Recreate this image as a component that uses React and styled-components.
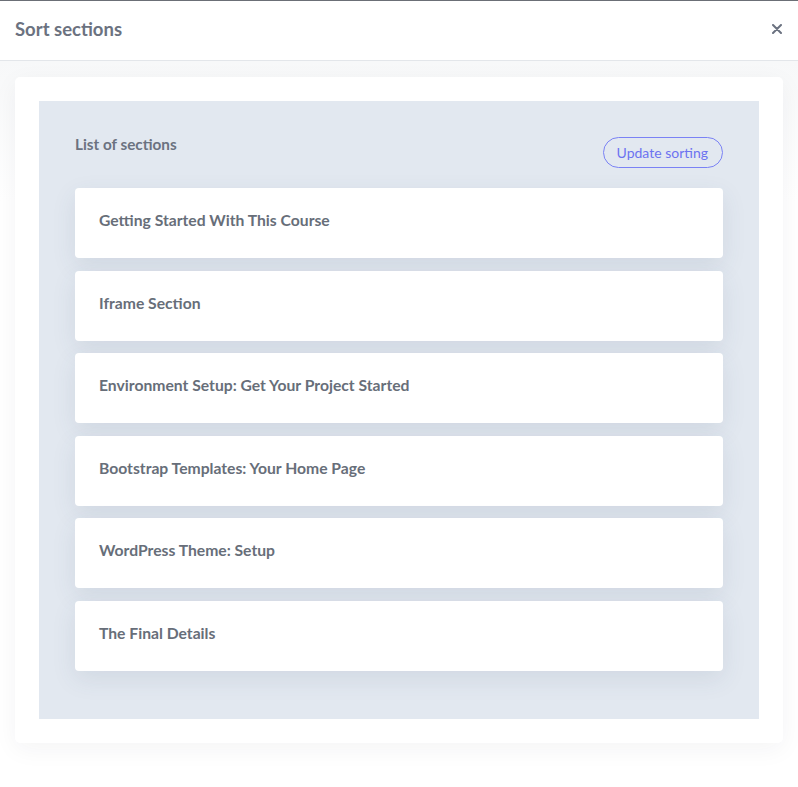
import React from 'react';
import styled, { createGlobalStyle } from 'styled-components';

const GlobalStyle = createGlobalStyle`
  html, body {
    margin: 0;
    padding: 0;
    background: #ffffff;
    font-family: Lato, "Noto Sans", "Liberation Sans", sans-serif;
  }
`;

const Modal = styled.div`
  width: 798px;
  height: 787px;
  display: flex;
  flex-direction: column;
  border-top: 1px solid #6b6f76;
  box-sizing: border-box;
  background: #ffffff;
`;

const Header = styled.div`
  height: 60px;
  display: flex;
  align-items: center;
  justify-content: space-between;
  padding: 0 15px 3px;
  box-sizing: border-box;
  border-bottom: 1px solid #e3e6ea;
  background: #ffffff;
`;

const Title = styled.h2`
  margin: 0;
  font-size: 18.5px;
  font-weight: 700;
  color: #6b7280;
`;

const CloseButton = styled.button`
  border: none;
  background: none;
  padding: 0;
  margin-right: -1px;
  width: 14px;
  height: 14px;
  display: flex;
  align-items: center;
  justify-content: center;
  cursor: pointer;
`;

const Body = styled.div`
  flex: 1;
  padding: 16px 15px 0;
  background: linear-gradient(#f7f8f9, #ffffff 140px);
`;

const Card = styled.div`
  background: #ffffff;
  border-radius: 5px;
  padding: 24px;
  box-shadow: 0 6px 24px rgba(30, 40, 60, 0.05);
`;

const Panel = styled.div`
  background: #e2e8f0;
  padding: 36px 36px 48px;
`;

const PanelHead = styled.div`
  display: flex;
  justify-content: space-between;
  align-items: flex-start;
  margin-bottom: 20px;
`;

const Label = styled.div`
  font-size: 15.3px;
  font-weight: 700;
  color: #6b7280;
  line-height: 15px;
`;

const PillButton = styled.button`
  font-family: inherit;
  font-size: 14px;
  color: #6c73f0;
  background: transparent;
  border: 1px solid #7a82f5;
  border-radius: 16px;
  height: 31px;
  padding: 0 14px 0 13px;
  cursor: pointer;
`;

const List = styled.div`
  display: flex;
  flex-direction: column;
  gap: 12.5px;
`;

const Item = styled.div`
  height: 70px;
  display: flex;
  align-items: center;
  padding: 0 24px 6px;
  box-sizing: border-box;
  background: #ffffff;
  border-radius: 4px;
  box-shadow: 0 8px 24px rgba(60, 80, 110, 0.1);
  font-size: 15.7px;
  font-weight: 700;
  color: #676e79;
`;

const sections = [
  'Getting Started With This Course',
  'Iframe Section',
  'Environment Setup: Get Your Project Started',
  'Bootstrap Templates: Your Home Page',
  'WordPress Theme: Setup',
  'The Final Details',
];

const App = () => (
  <>
    <GlobalStyle />
    <Modal>
      <Header>
        <Title>Sort sections</Title>
        <CloseButton aria-label="Close">
          <svg width="10" height="10" viewBox="0 0 10 10">
            <path d="M1 1L9 9M9 1L1 9" stroke="#6b7280" strokeWidth="2" strokeLinecap="round" />
          </svg>
        </CloseButton>
      </Header>
      <Body>
        <Card>
          <Panel>
            <PanelHead>
              <Label>List of sections</Label>
              <PillButton>Update sorting</PillButton>
            </PanelHead>
            <List>
              {sections.map((s) => (
                <Item key={s}>{s}</Item>
              ))}
            </List>
          </Panel>
        </Card>
      </Body>
    </Modal>
  </>
);

export default App;
